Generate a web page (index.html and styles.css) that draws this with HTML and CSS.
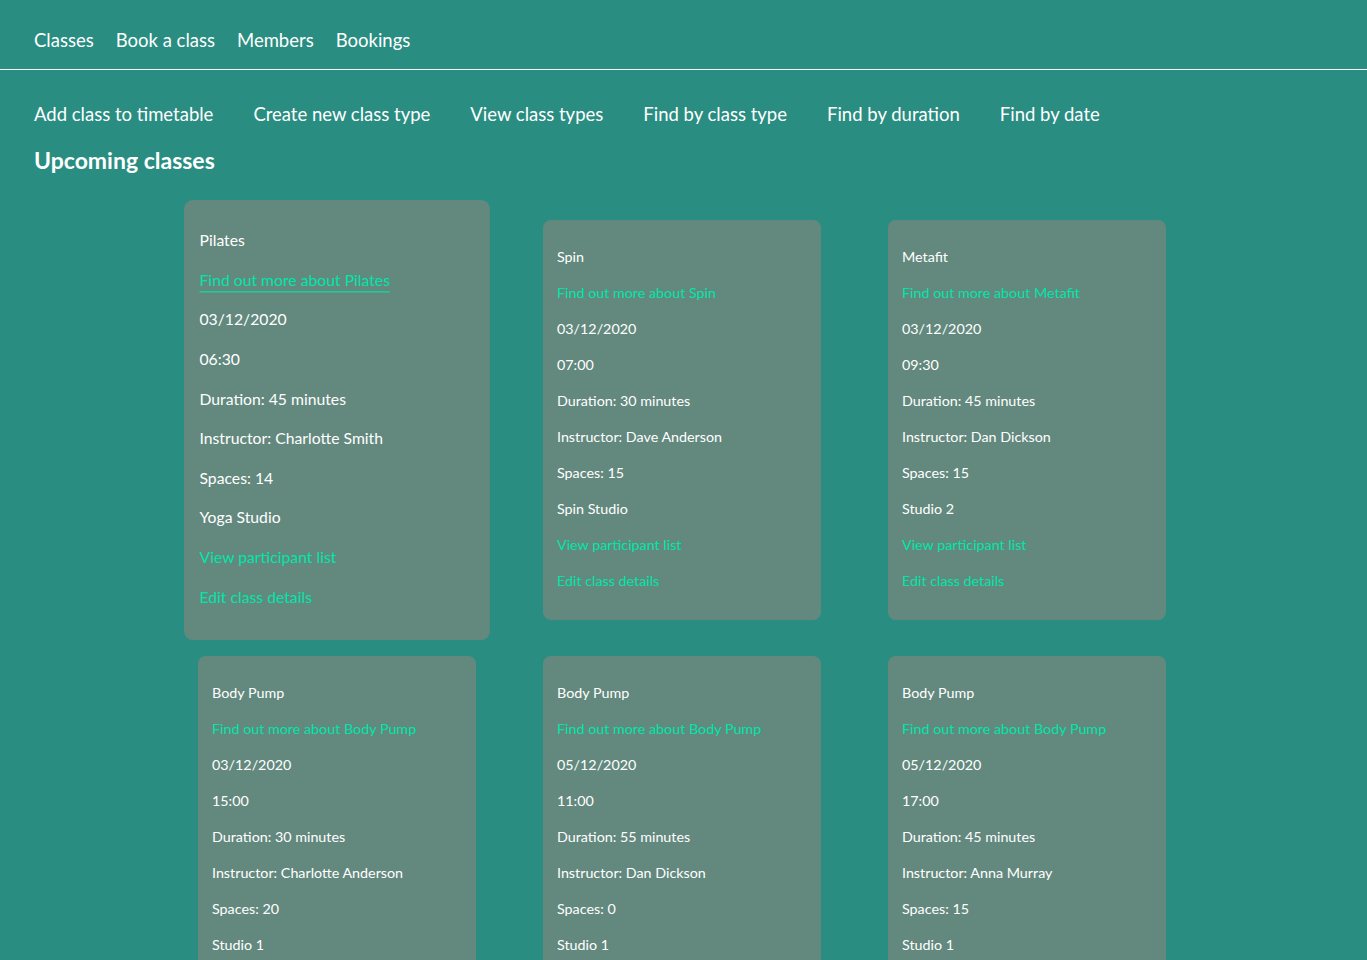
FILE: index.html
```html
<!DOCTYPE html>
<html lang="en">
<head>
    <meta charset="UTF-8">
    <meta name="viewport" content="width=device-width, initial-scale=1.0">
    <title>Classes</title>
    <link rel="stylesheet" href="styles.css">
</head>
<body>
    <header class="main-nav">
        <a href="#">Classes</a>
        <a href="#">Book a class</a>
        <a href="#">Members</a>
        <a href="#">Bookings</a>
    </header>

    <nav class="sub-nav">
        <a href="#">Add class to timetable</a>
        <a href="#">Create new class type</a>
        <a href="#">View class types</a>
        <a href="#">Find by class type</a>
        <a href="#">Find by duration</a>
        <a href="#">Find by date</a>
    </nav>

    <h2 class="page-title">Upcoming classes</h2>

    <div class="class-grid">
        <div class="class-card hovered">
            <p>Pilates</p>
            <p><a href="#" class="link-hovered">Find out more about Pilates</a></p>
            <p>03/12/2020</p>
            <p>06:30</p>
            <p>Duration: 45 minutes</p>
            <p>Instructor: Charlotte Smith</p>
            <p>Spaces: 14</p>
            <p>Yoga Studio</p>
            <p><a href="#">View participant list</a></p>
            <p><a href="#">Edit class details</a></p>
        </div>
        <div class="class-card">
            <p>Spin</p>
            <p><a href="#">Find out more about Spin</a></p>
            <p>03/12/2020</p>
            <p>07:00</p>
            <p>Duration: 30 minutes</p>
            <p>Instructor: Dave Anderson</p>
            <p>Spaces: 15</p>
            <p>Spin Studio</p>
            <p><a href="#">View participant list</a></p>
            <p><a href="#">Edit class details</a></p>
        </div>
        <div class="class-card">
            <p>Metafit</p>
            <p><a href="#">Find out more about Metafit</a></p>
            <p>03/12/2020</p>
            <p>09:30</p>
            <p>Duration: 45 minutes</p>
            <p>Instructor: Dan Dickson</p>
            <p>Spaces: 15</p>
            <p>Studio 2</p>
            <p><a href="#">View participant list</a></p>
            <p><a href="#">Edit class details</a></p>
        </div>
        <div class="class-card">
            <p>Body Pump</p>
            <p><a href="#">Find out more about Body Pump</a></p>
            <p>03/12/2020</p>
            <p>15:00</p>
            <p>Duration: 30 minutes</p>
            <p>Instructor: Charlotte Anderson</p>
            <p>Spaces: 20</p>
            <p>Studio 1</p>
            <p><a href="#">View participant list</a></p>
            <p><a href="#">Edit class details</a></p>
        </div>
        <div class="class-card">
            <p>Body Pump</p>
            <p><a href="#">Find out more about Body Pump</a></p>
            <p>05/12/2020</p>
            <p>11:00</p>
            <p>Duration: 55 minutes</p>
            <p>Instructor: Dan Dickson</p>
            <p>Spaces: 0</p>
            <p>Studio 1</p>
            <p><a href="#">View participant list</a></p>
            <p><a href="#">Edit class details</a></p>
        </div>
        <div class="class-card">
            <p>Body Pump</p>
            <p><a href="#">Find out more about Body Pump</a></p>
            <p>05/12/2020</p>
            <p>17:00</p>
            <p>Duration: 45 minutes</p>
            <p>Instructor: Anna Murray</p>
            <p>Spaces: 15</p>
            <p>Studio 1</p>
            <p><a href="#">View participant list</a></p>
            <p><a href="#">Edit class details</a></p>
        </div>
    </div>
</body>
</html>
```

FILE: styles.css
```css
body {
    font-family: Lato, "Open Sans", sans-serif;
    background-color: #298d81;
    color: #ffffff;
    margin: 0;
    padding: 0;
}
a {
    color: #ffffff;
    text-decoration: none;
}
.main-nav {
    display: flex;
    gap: 22px;
    padding: 29px 34px 18px;
    border-bottom: 1px solid #ffffff;
    font-size: 18.5px;
    line-height: 22px;
}
.sub-nav {
    display: flex;
    gap: 40px;
    margin: 33px 34px 0;
    font-size: 18.5px;
    line-height: 22px;
}
.page-title {
    margin: 22px 34px 0;
    font-size: 23px;
    line-height: 26px;
    font-weight: 700;
}
.class-grid {
    display: grid;
    grid-template-columns: repeat(3, 278px);
    column-gap: 67px;
    row-gap: 36px;
    justify-content: center;
    margin-top: 47px;
    padding-right: 3px;
}
.class-card {
    background-color: #63897e;
    border-radius: 8px;
    padding: 12px 14px 14px;
    font-size: 14.3px;
    line-height: 22px;
}
.class-card p {
    margin: 14px 0;
}
.class-card a {
    color: #00e6aa;
}
.class-card:hover,
.class-card.hovered {
    transform: scale(1.1);
}
.class-card a:hover,
.class-card a.link-hovered {
    border-bottom: 1px solid #00e6aa;
    padding-bottom: 2px;
}
```
